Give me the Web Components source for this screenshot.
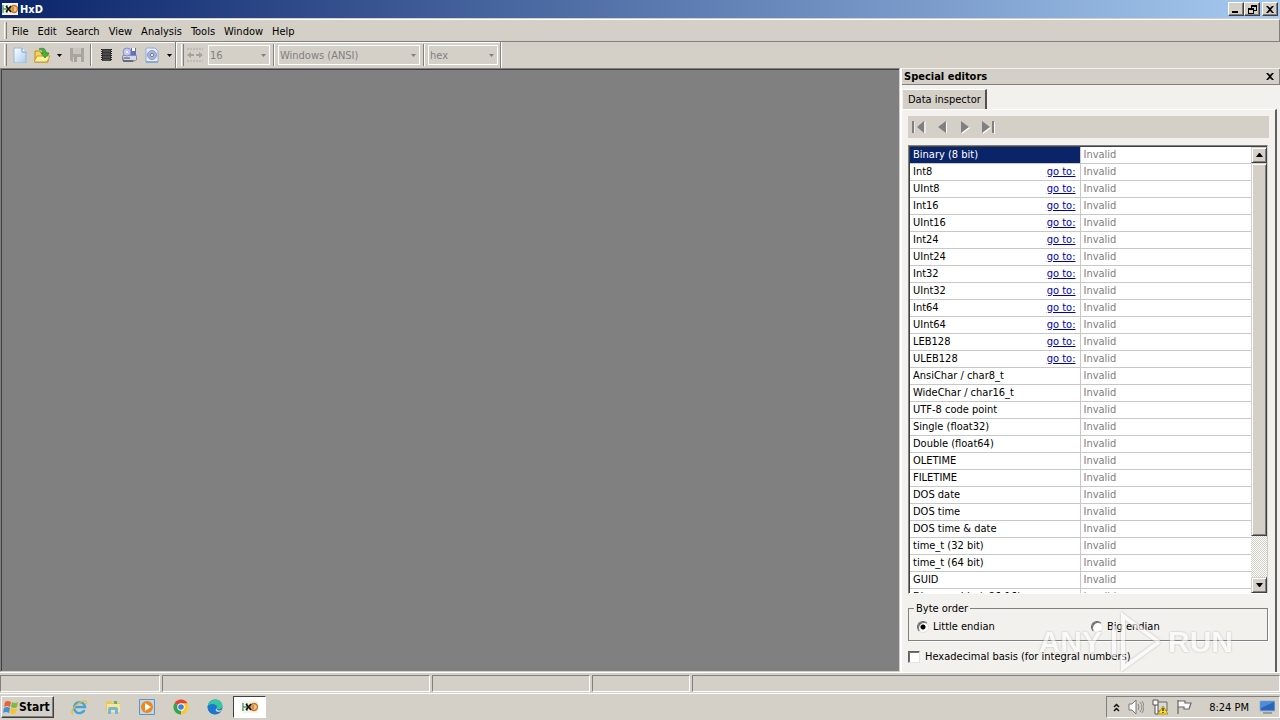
<!DOCTYPE html>
<html lang="en">
<head>
<meta charset="utf-8">
<title>HxD</title>
<style>
html, body { margin: 0; height: 100%; }
body { font: 11px/13px "DejaVu Sans Condensed", "DejaVu Sans", sans-serif; color: #000; background: #d4d0c8; overflow: hidden; }
</style>
</head>
<body>
<hxd-desktop></hxd-desktop>
<script>
const BASE = `
*, *::before, *::after { box-sizing: border-box; }
button, select, input { font: inherit; color: inherit; margin: 0; border-radius: 0; }
button { padding: 0; border: 0; background: none; }
svg { display: block; flex: none; }
`;
const define = (name, css, html, setup) => {
  const template = document.createElement('template');
  template.innerHTML = `<style>${BASE}${css}</style>${html}`;
  customElements.define(name, class extends HTMLElement {
    constructor() {
      super();
      this.attachShadow({ mode: 'open' }).append(template.content.cloneNode(true));
    }
    connectedCallback() { if (setup) setup(this, this.shadowRoot); }
  });
};

const ICONS = {
  app: ['16 16', '<path d="M0 2h16v12H0z" fill="#f4f2ea"/><path d="M1 4v8M1 8h4M5 4v8" stroke="#5a9c5c" stroke-width="1.400"/><circle cx="12" cy="8" r="3.500" fill="#efc387" stroke="#c9761c" stroke-width="1.400"/><path d="M11 6v4" stroke="#a85a18"/><path d="M4 5l5 6M9 5l-5 6" stroke="#111" stroke-width="1.600"/>'],
  min: ['8 8', '<path d="M0 6h6v2H0z"/>'],
  restore: ['9 9', '<path d="M3 0h6v6H6V9H0V3h3zM4 2v1h2v2h2V2zM1 5v3h4V5z" fill-rule="evenodd"/>'],
  close: ['8 7', '<path d="M0 0h2l2 2 2-2h2L5 3.5 8 7H6L4 5 2 7H0l3-3.500z"/>'],
  down: ['5 3', '<path d="M0 0h5L2.500 3z" fill="currentColor"/>'],
  sup: ['7 4', '<path d="M3 0h1l3 4H0z"/>'],
  sdown: ['7 4', '<path d="M0 0h7L4 4H3z"/>'],
  newfile: ['16 16', '<defs><linearGradient id="g" x2="1" y2="1"><stop stop-color="#fff"/><stop offset="1" stop-color="#a5cdf1"/></linearGradient></defs><path d="M2 1h8l4 4v11H2z" fill="url(#g)" stroke="#9ab8d8"/><path d="M10 1v4h4" fill="#fff" stroke="#6e9dcc"/>'],
  open: ['16 16', '<path d="M1 4h5l1 2h7v9H1z" fill="#f5d25c" stroke="#b98d1d"/><path d="M0 15l3-6h13l-3 6z" fill="#ffef9b" stroke="#c79a24"/><path d="M5 2c4-2 7 0 7 4h3l-4 5-4-5h2c0-2-1-3-4-4z" fill="#48b43c" stroke="#258123" stroke-width=".7"/>'],
  save: ['16 16', '<path d="M1 1h14v14H3l-2-2z" fill="#a9a6a0"/><path d="M4 1h8v6H4z" fill="#c9c5bd"/><path d="M4 10h8v5H4z" fill="#d4d0c8"/><path d="M5 10h3v5H5z" fill="#a5a29b"/>'],
  ram: ['16 16', '<path d="M4 2h9v12H4z" fill="#333"/><path d="M5 4h7M5 7h7M5 10h7M5 13h7" stroke="#666" stroke-width="1"/><path d="M3.500 2v12M13.500 2v12" stroke="#222" stroke-dasharray="1 1"/>'],
  disk: ['16 16', '<path d="M1 9l3-3h10l2 3v4l-4 2H3l-2-2z" fill="#888da0"/><path d="M2 9h13v4H3z" fill="#d5d8e8"/><path d="M3 11h6M2 14h10" stroke="#454959"/><circle cx="6" cy="5" r="4" fill="#c4c8ee" stroke="#8a91c0"/><circle cx="6" cy="5" r="1" fill="#fff"/><path d="M10 1h5v7h-5z" fill="#6070c4"/><path d="M11 1h3v3h-3z" fill="#fff"/>'],
  image: ['16 16', '<path d="M2 1h9l3 3v11H2z" fill="#e5effc" stroke="#8eacd0"/><circle cx="8" cy="8" r="4.500" fill="#a9b3e2" stroke="#8e96c4"/><circle cx="8" cy="8" r="1.600" fill="#fff" stroke="#777"/><path d="M2 15h12" stroke="#568dc6"/>'],
  width: ['16 16', '<path d="M0 2h16M0 14h16" stroke="#aaa69f" stroke-dasharray="2 1"/><path d="M0 8l4-3v2h3v2H4v2zM16 8l-4-3v2H9v2h3v2z" fill="#a5a29b"/>'],
  first: ['16 16', '<path d="M3 3v11M14 3v11L8 8" stroke="#fff" fill="none"/><path d="M1 2h2v12H1zM13 2v12L6 8z" fill="#808080"/>'],
  prev: ['16 16', '<path d="M13 3v11L7 9z" fill="#fff"/><path d="M12 2v12L4 8z" fill="#808080"/>'],
  next: ['16 16', '<path d="M5 3v12l8-6z" fill="#fff"/><path d="M4 2v12l8-6z" fill="#808080"/>'],
  last: ['16 16', '<path d="M3 3v12l8-6zM14 3v12h1V3z" fill="#fff"/><path d="M2 2v12l8-6zM12 2h2v12h-2z" fill="#808080"/>'],
  start: ['16 16', '<path d="M2 3q3-2 6 0L7 8Q4 6 1 8z" fill="#e9642e"/><path d="M9 3q3 2 6 0l-1 5q-3 2-6 0z" fill="#83b83f"/><path d="M1 9q3-2 6 0l-1 5q-3-2-6 0z" fill="#418fd7"/><path d="M8 9q3 2 6 0l-1 5q-3 2-6 0z" fill="#f5c52e"/>'],
  ie: ['16 16', '<path d="M13.500 11A5.500 5.500 0 1 1 14 8H4" fill="none" stroke="#43a4dd" stroke-width="2.400"/><path d="M2 15c-3-2 1-8 6-11s9-3 7 1" fill="none" stroke="#e7bd37" stroke-width="1.400"/>'],
  folder: ['16 16', '<path d="M1 2h5l1 2h8v9H1z" fill="#e8c75c"/><path d="M2 5h13v8H2z" fill="#f9e797"/><path d="M9 2h3v3H9z" fill="#6dae5a"/><path d="M3 15v-5q0-2 2-2h6q2 0 2 2v5h-3v-4H6v4z" fill="#75b6dc"/>'],
  media: ['16 16', '<path d="M.5.5h15v15H.5z" fill="#bcd8f0" stroke="#5d94c6"/><circle cx="8" cy="8" r="6" fill="#f28616"/><path d="M6 4l6 4-6 4z" fill="#fff"/>'],
  chrome: ['16 16', '<circle cx="8" cy="8" r="7.500" fill="#fbc931"/><path d="M8 8L1.500 4.250A7.500 7.500 0 0 1 14.500 4.250H8z" fill="#e64335"/><path d="M1.500 4.250L8 8l0 7.500A7.500 7.500 0 0 1 1.500 4.250z" fill="#30a653"/><circle cx="8" cy="8" r="3.700" fill="#fff"/><circle cx="8" cy="8" r="2.800" fill="#3e7fe8"/>'],
  edge: ['16 16', '<circle cx="8" cy="8" r="7.500" fill="#1673c5"/><path d="M.7 7C2-1 15-2 15.500 7c0 4-6 4-6 2 2-3-3-5-8.800-2z" fill="#3ac5a4"/><path d="M.7 8C2 4 9 4 9 8c-2 3 1 6 5 4C9 18 1 15 .7 8z" fill="#1a79cf"/><path d="M9.500 9c0 3 4 3 6 1l-2 2.500c-4 1.500-6-1-4-3.500z" fill="#d4d0c8"/>'],
  chevron: ['7 9', '<path d="M1 4l2.500-2.500L6 4M1 8l2.500-2.500L6 8" fill="none" stroke="#111" stroke-width="1.500"/>'],
  sound: ['16 16', '<path d="M1 5h3l4-4v14l-4-4H1z" fill="#fff" stroke="#777"/><path d="M10 5q2 3 0 6M12 3q4 5 0 10M14 2q4 6 0 12" fill="none" stroke="#888"/>'],
  network: ['16 16', '<path d="M5 3h10v9H5z" fill="#d7dbd8" stroke="#666"/><path d="M1 1h5v5H1zM3 6v9h3V6" fill="#f8f8f8" stroke="#555"/><path d="M11 7l5 8H6z" fill="#ffdc29" stroke="#bb9410"/><path d="M11 9v3M11 13v1" stroke="#222" stroke-width="1.300"/>'],
  flag: ['16 16', '<path d="M2 15V1M2 2h7v2h6l-2 6H8V8H2" fill="#fafafa" stroke="#666" stroke-width="1.200"/>'],
  desktop: ['16 14', '<path d="M1 1h15v10H1z" fill="#2866bc" stroke="#9db6d4"/><path d="M2 2h13L2 8z" fill="#4d8bdc"/><path d="M4 13h9" stroke="#666"/>']
};
define('hx-icon', ':host{display:block;flex:none}', '', (host, root) => {
  const [size, body] = ICONS[host.getAttribute('name')];
  const [w, h] = size.split(' ');
  root.innerHTML = `<style>:host{display:block;flex:none}svg{display:block}</style><svg width="${w}" height="${h}" viewBox="0 0 ${w} ${h}" aria-hidden="true">${body}</svg>`;
});

define('title-bar', `
:host{display:flex;align-items:center;height:18px;padding:0 2px;background:linear-gradient(90deg,#0a246a,#a6caf0);color:#fff;font-weight:bold}
.name{flex:1;margin-left:2px}
button{display:grid;place-items:center;width:16px;height:14px;background:#d4d0c8;border:1px solid;border-color:#fff #404040 #404040 #fff;box-shadow:inset -1px -1px #808080}
.last{margin-left:2px}`, `
<hx-icon name="app"></hx-icon><span class="name">HxD</span>
<button aria-label="Minimize"><hx-icon name="min"></hx-icon></button><button aria-label="Restore"><hx-icon name="restore"></hx-icon></button><button class="last" aria-label="Close"><hx-icon name="close"></hx-icon></button>`);

define('bar-grip', `:host{display:block;flex:none;align-self:stretch;width:3px;margin:2px 0;border-left:1px solid #fff;border-right:1px solid #808080}`, '');

define('menu-bar', `
:host{display:flex;align-items:center;height:23px;margin-top:1px;padding-left:4px;border-top:1px solid #fff;border-bottom:1px solid #808080;border-right:1px solid #808080}
nav{display:flex;padding:1px 0 0 1px}button{padding:0 5px 0 4px}`, `<bar-grip></bar-grip><nav></nav>`, (host, root) => {
  root.querySelector('nav').innerHTML = host.getAttribute('items').split(',').map(t => `<button>${t}</button>`).join('');
});

define('tool-combo', `
:host{display:grid;align-items:center;height:20px;border:1px solid #fff;color:#808080}
select{grid-area:1/1;width:100%;height:18px;appearance:none;border:0;padding:0 1px;background:none;color:inherit;opacity:1}
hx-icon{grid-area:1/1;justify-self:end;margin-right:3px}`, `<select disabled><option></option></select><hx-icon name="down"></hx-icon>`, (host, root) => {
  root.querySelector('option').textContent = host.getAttribute('value');
  root.querySelector('select').setAttribute('aria-label', host.getAttribute('label'));
});

define('tool-bar', `
:host{display:flex;height:26px}
.band{display:flex;align-items:center;padding-left:4px;border-right:1px solid #808080;box-shadow:1px 0 #fff,inset 0 1px #fff}
.band + .band{margin-left:1px}
button{display:grid;place-items:center;width:22px;height:22px}
.new{margin-left:2px}
.mem{width:23px}
.drop{width:12px}
i{width:2px;height:22px;border-left:1px solid #808080;border-right:1px solid #fff;margin:0 3px}
i.tight{margin:0 2px}
.w16{width:62px;margin-left:2px}.wide{width:142px}.hex{width:70px;margin-right:2px}`, `
<div class="band"><bar-grip></bar-grip>
<button class="new" aria-label="New"><hx-icon name="newfile"></hx-icon></button><button aria-label="Open"><hx-icon name="open"></hx-icon></button><button class="drop" aria-label="Recent files"><hx-icon name="down"></hx-icon></button><button class="mem" aria-label="Save"><hx-icon name="save"></hx-icon></button><i class="tight"></i>
<button class="mem" aria-label="Open main memory"><hx-icon name="ram"></hx-icon></button><button class="mem" aria-label="Open disk"><hx-icon name="disk"></hx-icon></button><button class="mem" aria-label="Open disk image"><hx-icon name="image"></hx-icon></button><button class="drop" aria-label="Recent images"><hx-icon name="down"></hx-icon></button></div>
<div class="band"><bar-grip></bar-grip><button aria-label="Bytes per row"><hx-icon name="width"></hx-icon></button>
<tool-combo class="w16" label="Bytes per row" value="16"></tool-combo><i></i><tool-combo class="wide" label="Character set" value="Windows (ANSI)"></tool-combo><i></i><tool-combo class="hex" label="Offset base" value="hex"></tool-combo></div>`);

define('scroll-track', `
:host{display:flex;flex-direction:column;width:16px;background:repeating-conic-gradient(#fff 0 25%,#d4d0c8 0 50%) 0 0/2px 2px}
button,.thumb{background:#d4d0c8;border:1px solid;border-color:#d4d0c8 #404040 #404040 #d4d0c8;box-shadow:inset 1px 1px #fff,inset -1px -1px #808080}
button{display:grid;place-items:center;height:16px;flex:none}
.rail{flex:1;min-height:0}.thumb{height:90%}`, `<button aria-label="Scroll up"><hx-icon name="sup"></hx-icon></button><div class="rail"><div class="thumb"></div></div><button aria-label="Scroll down"><hx-icon name="sdown"></hx-icon></button>`);

define('data-grid', `
:host{display:flex;min-height:0;overflow:hidden;background:#fff;border:1px solid;border-color:#808080 #d4d0c8 #fff #808080;box-shadow:inset 1px 1px #404040;padding:1px 0 0 1px}
.view{flex:1;overflow:hidden}
table{width:100%;border-collapse:separate;border-spacing:0;table-layout:fixed}
th,td{height:17px;padding:0 4px 0 3px;line-height:16px;font-weight:normal;text-align:left;white-space:nowrap;border-bottom:1px solid #c8c8c8}
th{border-right:1px solid #c8c8c8}
td{color:#808080}
th div{display:flex;justify-content:space-between}
a{color:#0000b0;text-decoration:underline}
.on{background:#0a246a;color:#fff}`, `<div class="view"><table><tbody></tbody></table></div><scroll-track></scroll-track>`, (host, root) => {
  const jump = ['Int8','UInt8','Int16','UInt16','Int24','UInt24','Int32','UInt32','Int64','UInt64','LEB128','ULEB128'];
  const names = ['Binary (8 bit)', ...jump, 'AnsiChar / char8_t','WideChar / char16_t','UTF-8 code point','Single (float32)','Double (float64)','OLETIME','FILETIME','DOS date','DOS time','DOS time &amp; date','time_t (32 bit)','time_t (64 bit)','GUID','Disassembly (x86-16)'];
  root.querySelector('tbody').innerHTML = names.map((n, i) => `<tr><th scope="row"${i ? '' : ' class="on"'}><div><span>${n}</span>${jump.includes(n) ? '<a href="#">go to:</a>' : ''}</div></th><td>Invalid</td></tr>`).join('');
});

define('byte-order', `
:host{display:block}
fieldset{display:grid;grid-template-columns:1fr 1fr;gap:6px;margin:0 1px 0 0;padding:5px 8px 7px;border:1px solid #808080;box-shadow:1px 1px #fff;min-width:0}
legend{padding:0 2px;margin-left:-3px}
label{display:flex;align-items:center;gap:4px;height:13px}
input{appearance:none;width:12px;height:12px;border-radius:50%;background:#fff;border:1px solid;border-color:#606060 #e8e4dc #e8e4dc #606060;box-shadow:inset 1px 1px #707070}
input:checked{background:radial-gradient(circle,#000 2px,#fff 3px)}`, `
<fieldset><legend>Byte order</legend><label><input type="radio" name="order" checked>Little endian</label><label><input type="radio" name="order">Big endian</label></fieldset>`);

define('side-panel', `
:host{display:flex;flex-direction:column;min-height:0;padding-top:1px;background:#f3f1ee;border-left:2px solid #fff}
header{display:flex;align-items:center;justify-content:space-between;height:16px;flex:none;padding:0 5px 0 2px;background:#d4d0c8;border-bottom:1px solid #808080;border-right:1px solid #808080;font-weight:bold}
.tabs{display:flex;height:24px;flex:none;padding:4px 0 0 1px}
.tab{padding:0 4px 0 5px;background:#d4d0c8;border-top:1px solid #fff;border-right:2px solid #505050}
.page{flex:1;min-height:0;display:flex;flex-direction:column;margin-right:3px;padding:6px 6px 9px;border-top:1px solid #fff;border-right:2px solid #606060}
.nav{display:flex;gap:7px;height:22px;flex:none;align-items:center;padding-left:3px;background:#d4d0c8}
data-grid{flex:1;margin:7px 1px 8px 0}
.check{display:flex;align-items:center;gap:5px;height:13px;margin-top:9px}
.check input{appearance:none;width:12px;height:12px;background:#fff;border:1px solid;border-color:#606060 #e8e4dc #e8e4dc #606060;box-shadow:inset 1px 1px #707070}`, `
<header><span>Special editors</span><button aria-label="Close panel"><hx-icon name="close"></hx-icon></button></header>
<div class="tabs"><button class="tab">Data inspector</button></div>
<div class="page"><div class="nav"><button aria-label="First"><hx-icon name="first"></hx-icon></button><button aria-label="Previous"><hx-icon name="prev"></hx-icon></button><button aria-label="Next"><hx-icon name="next"></hx-icon></button><button aria-label="Last"><hx-icon name="last"></hx-icon></button></div>
<data-grid></data-grid><byte-order></byte-order><label class="check"><input type="checkbox">Hexadecimal basis (for integral numbers)</label></div>`);

define('status-bar', `
:host{display:flex;gap:2px;height:21px;padding:2px 0 1px;border-top:1px solid #fff}
div{width:160px;border:1px solid;border-color:#808080 #fff #fff #808080}
.b{width:268px}.c{width:158px}.d{width:98px}.e{flex:1}`, `<div></div><div class="b"></div><div class="c"></div><div class="d"></div><div class="e"></div>`);

define('task-bar', `
:host{display:flex;align-items:center;height:27px;border-top:1px solid #fff}
.start{display:flex;align-items:center;width:53px;height:22px;margin-left:1px;padding-left:1px;font-size:12px;font-weight:bold;border:1px solid;border-color:#fff #404040 #404040 #fff;box-shadow:inset -1px -1px #808080}
.apps{display:flex;margin-left:8px;flex:1}
.apps button{display:grid;place-items:center;width:34px;height:22px}
.apps .on{width:33px;background:#fff;border:1px solid;border-color:#404040 #fff #fff #404040;margin-left:1px}
.tray{display:flex;align-items:center;gap:8px;height:22px;padding:0 4px 0 6px;border:1px solid;border-color:#808080 #fff #fff #808080}
time{margin:0 2px 0 9px}`, `
<button class="start"><hx-icon name="start"></hx-icon>Start</button>
<div class="apps"><button aria-label="Internet Explorer"><hx-icon name="ie"></hx-icon></button><button aria-label="Explorer"><hx-icon name="folder"></hx-icon></button><button aria-label="Media Player"><hx-icon name="media"></hx-icon></button><button aria-label="Chrome"><hx-icon name="chrome"></hx-icon></button><button aria-label="Edge"><hx-icon name="edge"></hx-icon></button><button class="on" aria-label="HxD"><hx-icon name="app"></hx-icon></button></div>
<div class="tray"><hx-icon name="chevron"></hx-icon><hx-icon name="sound"></hx-icon><hx-icon name="network"></hx-icon><hx-icon name="flag"></hx-icon><time>8:24 PM</time><hx-icon name="desktop"></hx-icon></div>`);

define('water-mark', `
:host{position:absolute;right:47px;bottom:48px;display:flex;align-items:center;gap:5px;font:bold 30px/60px "Liberation Sans",sans-serif;color:#fff;opacity:.6;pointer-events:none;filter:drop-shadow(0 0 1px #999)}`, `
<span>ANY</span><svg width="56" height="60" viewBox="0 0 56 60" fill="none" stroke="#fff" stroke-width="4"><path d="M16 22V4l36 26M16 38v18l36-26M16 22v16M7 14v32"/></svg><span>RUN</span>`);

define('hxd-desktop', `
:host{display:flex;flex-direction:column;height:100vh;position:relative}
main{display:flex;flex:1;min-height:0}
.mdi{flex:1;background:#808080;border:1px solid;border-color:#808080 #d4d0c8 #d4d0c8 #808080;box-shadow:inset 1px 1px #404040}
side-panel{width:380px}`, `
<title-bar></title-bar><menu-bar items="File,Edit,Search,View,Analysis,Tools,Window,Help"></menu-bar><tool-bar></tool-bar>
<main><div class="mdi"></div><side-panel></side-panel></main>
<status-bar></status-bar><task-bar></task-bar><water-mark></water-mark>`);
</script>
</body>
</html>
